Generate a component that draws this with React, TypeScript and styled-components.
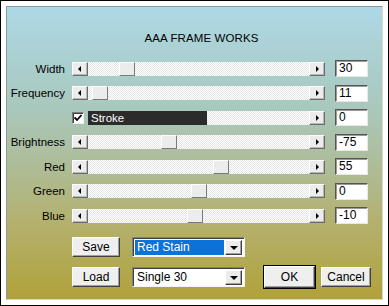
import React from "react";
import styled, { createGlobalStyle } from "styled-components";

const GlobalStyle = createGlobalStyle`
  html, body {
    margin: 0;
    padding: 0;
    background: #ffffff;
  }
  body {
    font-family: "Liberation Sans", Arial, sans-serif;
  }
`;

const Frame = styled.div`
  width: 389px;
  height: 306px;
  box-sizing: border-box;
  border: 1px solid #000;
  background: #fff;
  padding: 5px;
`;

const Panel = styled.div`
  height: 100%;
  box-sizing: border-box;
  border-left: 1px solid #8a9a9a;
  border-top: 1px solid #8a9a9a;
  border-right: 1px solid #d8d8c8;
  border-bottom: 1px solid #d8d8c8;
  background: linear-gradient(
    to bottom,
    #add8e6 0%,
    #a9c8bc 35%,
    #aebc96 55%,
    #b4b06c 75%,
    #b0a23a 100%
  );
  display: flex;
  flex-direction: column;
  color: #000;
  font-size: 11.5px;
`;

const Title = styled.div`
  text-align: center;
  padding: 25px 0 0 14px;
  height: 28px;
  font-size: 11.5px;
  letter-spacing: 0.1px;
`;

const Rows = styled.div`
  display: flex;
  flex-direction: column;
  gap: 7.5px;
`;

const Row = styled.div`
  display: grid;
  grid-template-columns: 58px 253px 36px;
  column-gap: 7px;
  align-items: center;
  height: 17px;

  & > :last-child {
    margin-left: 3px;
  }
`;

const Label = styled.div`
  text-align: right;
  line-height: 14px;
`;

const Scroll = styled.div`
  display: flex;
  height: 14px;
  box-sizing: border-box;
`;

const Track = styled.div`
  position: relative;
  flex: 1;
  background-color: #fafafa;
  background-image: repeating-conic-gradient(#ffffff 0 25%, #e4e4e4 0 50%);
  background-size: 2px 2px;
`;

const ArrowButton = styled.div<{ $dir: "left" | "right" }>`
  width: 16px;
  height: 14px;
  box-sizing: border-box;
  background: #ececec;
  border-top: 1px solid #ffffff;
  border-left: 1px solid #ffffff;
  border-right: 1px solid #6b6b6b;
  border-bottom: 1px solid #6b6b6b;
  box-shadow: inset -1px -1px 0 #b8b8b8;
  display: flex;
  align-items: center;
  justify-content: center;

  &::after {
    content: "";
    width: 0;
    height: 0;
    border-top: 3px solid transparent;
    border-bottom: 3px solid transparent;
    ${(p) =>
      p.$dir === "left"
        ? "border-right: 3px solid #000; margin-right: 1px;"
        : "border-left: 3px solid #000; margin-left: 1px;"}
  }
`;

const Thumb = styled.div<{ $left: number }>`
  position: absolute;
  top: 0;
  left: ${(p) => p.$left}px;
  width: 16px;
  height: 14px;
  box-sizing: border-box;
  background: #ececec;
  border-top: 1px solid #ffffff;
  border-left: 1px solid #ffffff;
  border-right: 1px solid #7a7a7a;
  border-bottom: 1px solid #7a7a7a;
`;

const CheckBox = styled.div`
  width: 12px;
  height: 12px;
  margin: 1px 4px 0 0;
  box-sizing: border-box;
  background: #fff;
  border-top: 1px solid #7a7a7a;
  border-left: 1px solid #7a7a7a;
  border-right: 1px solid #f0f0f0;
  border-bottom: 1px solid #f0f0f0;
  box-shadow: inset 1px 1px 0 #404040;
  display: flex;
  align-items: center;
  justify-content: center;
`;

const FillBar = styled.div<{ $width: number }>`
  position: absolute;
  top: 0;
  left: 0;
  height: 14px;
  width: ${(p) => p.$width}px;
  background: #2b2b2b;
  color: #fff;
  line-height: 14px;
  padding-left: 3px;
  box-sizing: border-box;
`;

const ValueBox = styled.div`
  height: 17px;
  box-sizing: border-box;
  background: #fff;
  border-top: 1px solid #555;
  border-left: 1px solid #555;
  border-right: 1px solid #e8e8e8;
  border-bottom: 1px solid #e8e8e8;
  box-shadow: inset 1px 1px 0 #9a9a9a;
  padding-left: 3px;
  line-height: 15px;
  font-size: 12px;
`;

const Controls = styled.div`
  display: flex;
  flex-direction: column;
  gap: 9px;
  margin-top: 13px;
  padding-left: 65px;
`;

const ControlRow = styled.div`
  display: flex;
  align-items: center;
`;

const Button = styled.div<{ $w: number; $gap?: number; $default?: boolean }>`
  flex-shrink: 0;
  width: ${(p) => p.$w}px;
  margin-left: ${(p) => p.$gap ?? 0}px;
  height: ${(p) => (p.$default ? 22 : 20)}px;
  box-sizing: border-box;
  background: #efefef;
  border-top: 1px solid #ffffff;
  border-left: 1px solid #ffffff;
  border-right: 1px solid #404040;
  border-bottom: 1px solid #404040;
  box-shadow: inset -1px -1px 0 #a0a0a0;
  display: flex;
  align-items: center;
  justify-content: center;
  font-size: 12px;
  ${(p) => (p.$default ? "outline: 1px solid #000; outline-offset: 0;" : "")}
`;

const Select = styled.div`
  flex-shrink: 0;
  width: 113px;
  height: 20px;
  margin-left: 12px;
  box-sizing: border-box;
  background: #fff;
  border-top: 1px solid #808080;
  border-left: 1px solid #808080;
  border-right: 1px solid #f4f4f4;
  border-bottom: 1px solid #f4f4f4;
  box-shadow: inset 1px 1px 0 #404040;
  display: flex;
  align-items: stretch;
  padding: 2px 2px 1px 2px;
  font-size: 12px;
`;

const SelectText = styled.div<{ $selected?: boolean }>`
  flex: 1;
  line-height: 15px;
  padding-left: 2px;
  margin-right: 1px;
  background: ${(p) => (p.$selected ? "#0a72d8" : "transparent")};
  color: ${(p) => (p.$selected ? "#fff" : "#000")};
`;

const DropButton = styled.div`
  width: 17px;
  box-sizing: border-box;
  background: #ececec;
  border-top: 1px solid #ffffff;
  border-left: 1px solid #ffffff;
  border-right: 1px solid #404040;
  border-bottom: 1px solid #404040;
  box-shadow: inset -1px -1px 0 #a0a0a0;
  display: flex;
  align-items: center;
  justify-content: center;

  &::after {
    content: "";
    border-left: 4px solid transparent;
    border-right: 4px solid transparent;
    border-top: 4px solid #000;
    margin-top: 1px;
  }
`;

type Slider = { label: string; value: string; thumb: number };

const sliders: Slider[] = [
  { label: "Width", value: "30", thumb: 31 },
  { label: "Frequency", value: "11", thumb: 4 },
];

const sliders2: Slider[] = [
  { label: "Brightness", value: "-75", thumb: 73 },
  { label: "Red", value: "55", thumb: 125 },
  { label: "Green", value: "0", thumb: 103 },
  { label: "Blue", value: "-10", thumb: 99 },
];

const SliderRow: React.FC<Slider> = ({ label, value, thumb }) => (
  <Row>
    <Label>{label}</Label>
    <Scroll>
      <ArrowButton $dir="left" />
      <Track>
        <Thumb $left={thumb} />
      </Track>
      <ArrowButton $dir="right" />
    </Scroll>
    <ValueBox>{value}</ValueBox>
  </Row>
);

const App: React.FC = () => {
  return (
    <>
      <GlobalStyle />
      <Frame>
        <Panel>
          <Title>AAA FRAME WORKS</Title>
          <Rows>
            {sliders.map((s) => (
              <SliderRow key={s.label} {...s} />
            ))}
            <Row>
              <Label />
              <Scroll>
                <CheckBox>
                  <svg width="8" height="8" viewBox="0 0 8 8">
                    <path d="M0.5 3.5 L3 6 L7.5 1" stroke="#000" strokeWidth="1.8" fill="none" />
                  </svg>
                </CheckBox>
                <Track>
                  <FillBar $width={119}>Stroke</FillBar>
                </Track>
                <ArrowButton $dir="right" />
              </Scroll>
              <ValueBox>0</ValueBox>
            </Row>
            {sliders2.map((s) => (
              <SliderRow key={s.label} {...s} />
            ))}
          </Rows>
          <Controls>
            <ControlRow>
              <Button $w={48}>Save</Button>
              <Select>
                <SelectText $selected>Red Stain</SelectText>
                <DropButton />
              </Select>
            </ControlRow>
            <ControlRow>
              <Button $w={48}>Load</Button>
              <Select>
                <SelectText>Single 30</SelectText>
                <DropButton />
              </Select>
              <Button $w={51} $gap={19} $default>
                OK
              </Button>
              <Button $w={50} $gap={6}>
                Cancel
              </Button>
            </ControlRow>
          </Controls>
        </Panel>
      </Frame>
    </>
  );
};

export default App;
